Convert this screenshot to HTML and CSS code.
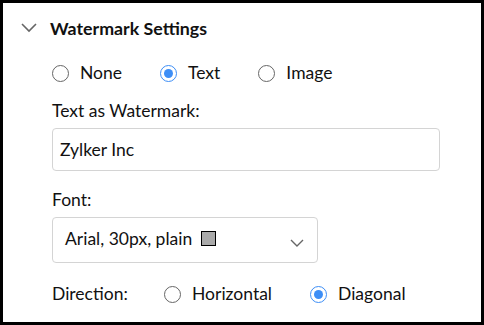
FILE: index.html
```html
<!DOCTYPE html>
<html lang="en">
<head>
    <meta charset="UTF-8">
    <title>Watermark Settings</title>
    <link rel="stylesheet" href="styles.css">
</head>
<body>
    <div class="panel">
        <div class="header">
            <svg class="chevron" width="16" height="10" viewBox="0 0 16 10">
                <path d="M1 1 L8 8 L15 1" fill="none" stroke="#666" stroke-width="1.6"/>
            </svg>
            <span class="title">Watermark Settings</span>
        </div>

        <div class="content">
            <div class="radios">
                <label class="option"><span class="radio"></span>None</label>
                <label class="option"><span class="radio checked"></span>Text</label>
                <label class="option"><span class="radio"></span>Image</label>
            </div>

            <div class="field-label">Text as Watermark:</div>
            <div class="textbox">Zylker Inc</div>

            <div class="field-label font-label">Font:</div>
            <div class="select">
                <span>Arial, 30px, plain</span>
                <span class="swatch"></span>
                <svg class="select-arrow" width="14" height="8" viewBox="0 0 14 8">
                    <path d="M1 1 L7 7 L13 1" fill="none" stroke="#666" stroke-width="1.4"/>
                </svg>
            </div>

            <div class="direction">
                <span class="direction-label">Direction:</span>
                <label class="option"><span class="radio"></span>Horizontal</label>
                <label class="option"><span class="radio checked"></span>Diagonal</label>
            </div>
        </div>
    </div>
</body>
</html>
```

FILE: styles.css
```css
body{
    margin: 0;
    font-family: Lato, "Open Sans", sans-serif;
    color: #111;
    background: #fff;
}

.panel{
    width: 484px;
    height: 325px;
    box-sizing: border-box;
    border: 3px solid #000;
    overflow: hidden;
}

.header{
    display: flex;
    align-items: center;
    height: 26px;
    padding: 12px 0 0 18px;
}

.chevron{
    margin-right: 13px;
}

.title{
    font-size: 17.8px;
    font-weight: bold;
}

.content{
    padding-left: 49px;
    font-size: 17.5px;
}

.radios{
    display: flex;
    align-items: center;
    height: 20px;
    margin-top: 22px;
}

.option{
    display: flex;
    align-items: center;
    margin-right: 38px;
    line-height: 20px;
}

.radio{
    width: 15px;
    height: 15px;
    border: 1.7px solid #666;
    border-radius: 50%;
    margin-right: 11px;
    position: relative;
}

.radio.checked{
    border-color: #3d8ef6;
}

.radio.checked::after{
    content: "";
    position: absolute;
    left: 3px;
    top: 3px;
    width: 9px;
    height: 9px;
    border-radius: 50%;
    background: #3d8ef6;
}

.field-label{
    margin-top: 18px;
    line-height: 20px;
}

.textbox{
    width: 388px;
    height: 43px;
    box-sizing: border-box;
    margin-top: 7px;
    border: 1px solid #d4d4d4;
    border-radius: 4px;
    padding-left: 7px;
    line-height: 41px;
}

.font-label{
    margin-top: 19px;
}

.select{
    display: flex;
    align-items: center;
    width: 266px;
    height: 46px;
    box-sizing: border-box;
    margin-top: 7px;
    border: 1px solid #d4d4d4;
    border-radius: 4px;
    padding: 0 0 4px 12px;
}

.swatch{
    width: 13px;
    height: 13px;
    margin-left: 9px;
    background: #aaa;
    border: 1px solid #000;
}

.select-arrow{
    margin-left: auto;
    margin-right: 13px;
    margin-top: 10px;
}

.direction{
    display: flex;
    align-items: center;
    height: 20px;
    margin-top: 21px;
}

.direction-label{
    width: 112px;
    line-height: 20px;
}
```
